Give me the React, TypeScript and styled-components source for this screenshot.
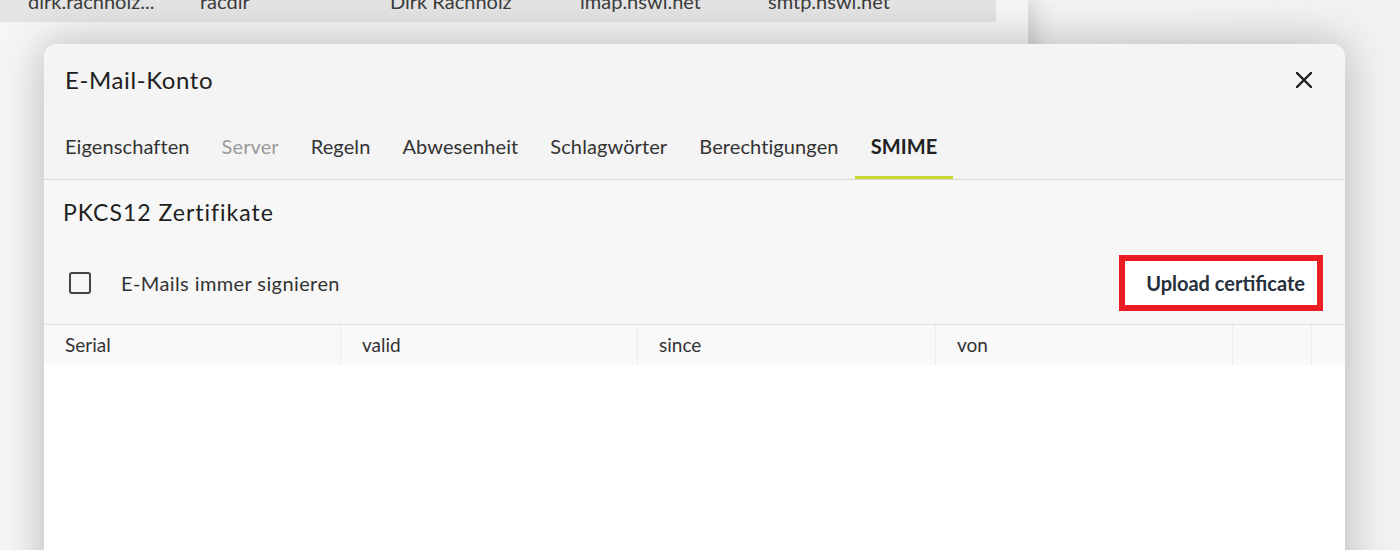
import React from "react";
import styled, { createGlobalStyle } from "styled-components";

const GlobalStyle = createGlobalStyle`
  html, body {
    margin: 0;
    padding: 0;
    height: 100%;
    overflow: hidden;
    background: #f4f4f4;
    font-family: "Lato", "Noto Sans", sans-serif;
  }
`;

const accounts = [
  ["dirk.rachholz...", "racdir", "Dirk Rachholz", "imap.nswi.net", "smtp.nswi.net"],
];

const tabs = [
  { label: "Eigenschaften" },
  { label: "Server", disabled: true },
  { label: "Regeln" },
  { label: "Abwesenheit" },
  { label: "Schlagwörter" },
  { label: "Berechtigungen" },
  { label: "SMIME", active: true },
];

const columns = ["Serial", "valid", "since", "von", "", ""];

export default function App() {
  return (
    <>
      <GlobalStyle />
      <Screen>
        <BackPanel>
          {accounts.map((row, i) => (
            <AccountRow key={i}>
              {row.map((cell, j) => (
                <AccountCell key={j} $width={[172, 190, 190, 188, 160][j]}>
                  {cell}
                </AccountCell>
              ))}
            </AccountRow>
          ))}
        </BackPanel>

        <Dialog>
          <TitleBar>
            <Title>E-Mail-Konto</Title>
            <CloseButton aria-label="Schließen">
              <svg width="18" height="18" viewBox="0 0 18 18">
                <path
                  d="M2 2 L16 16 M16 2 L2 16"
                  stroke="#1a1a1a"
                  strokeWidth="2.4"
                  strokeLinecap="round"
                />
              </svg>
            </CloseButton>
          </TitleBar>

          <TabBar>
            {tabs.map((t) => (
              <Tab key={t.label} $active={!!t.active} $disabled={!!t.disabled}>
                {t.label}
              </Tab>
            ))}
          </TabBar>

          <Content>
            <SectionTitle>PKCS12 Zertifikate</SectionTitle>
            <Toolbar>
              <CheckLabel>
                <CheckBox />
                E-Mails immer signieren
              </CheckLabel>
              <UploadButton>Upload certificate</UploadButton>
            </Toolbar>
            <TableHead>
              {columns.map((c, i) => (
                <HeadCell key={i}>{c}</HeadCell>
              ))}
            </TableHead>
            <TableBody />
          </Content>
        </Dialog>
      </Screen>
    </>
  );
}

const Screen = styled.div`
  position: relative;
  width: 1400px;
  height: 550px;
  overflow: hidden;
  background: linear-gradient(90deg, #f7f7f7 0%, #f2f2f2 100%);
`;

const BackPanel = styled.div`
  width: 1028px;
  height: 550px;
  background: #f6f6f6;
  box-shadow: 6px 0 22px rgba(0, 0, 0, 0.16);
`;

const AccountRow = styled.div`
  display: flex;
  align-items: flex-end;
  width: 968px;
  height: 22px;
  padding-left: 28px;
  background: #e4e4e4;
  overflow: hidden;
`;

const AccountCell = styled.div<{ $width: number }>`
  flex: 0 0 ${(p) => p.$width}px;
  font-size: 20px;
  line-height: 20px;
  margin-bottom: 11px;
  color: #3c3c3c;
  white-space: nowrap;
`;

const Dialog = styled.div`
  position: absolute;
  top: 44px;
  left: 44px;
  width: 1301px;
  height: 560px;
  display: flex;
  flex-direction: column;
  background: #f4f4f4;
  border-radius: 12px 12px 0 0;
  box-shadow: 0 0 46px rgba(0, 0, 0, 0.26);
  overflow: hidden;
`;

const TitleBar = styled.div`
  display: flex;
  align-items: center;
  justify-content: space-between;
  height: 71px;
  padding: 0 32px 0 21px;
`;

const Title = styled.h1`
  margin: 0;
  font-size: 24px;
  line-height: 28px;
  font-weight: 400;
  letter-spacing: 0.6px;
  color: #1e1e1e;
`;

const CloseButton = styled.button`
  display: flex;
  padding: 0;
  border: none;
  background: none;
  cursor: pointer;
`;

const TabBar = styled.div`
  display: flex;
  padding-left: 5px;
  border-bottom: 1px solid #dadada;
`;

const Tab = styled.div<{ $active: boolean; $disabled: boolean }>`
  display: flex;
  align-items: center;
  height: 61px;
  padding: 0 16px;
  border-bottom: 3px solid ${(p) => (p.$active ? "#c9d72f" : "transparent")};
  font-size: 20px;
  letter-spacing: 0.1px;
  font-weight: ${(p) => (p.$active ? 700 : 400)};
  color: ${(p) => (p.$disabled ? "#9a9a9a" : p.$active ? "#222" : "#333")};
  cursor: pointer;
`;

const Content = styled.div`
  flex: 1;
  display: flex;
  flex-direction: column;
  background: #f7f7f7;
`;

const SectionTitle = styled.h2`
  margin: 0;
  padding: 19px 19px 19px;
  font-size: 23px;
  line-height: 26px;
  font-weight: 400;
  letter-spacing: 1px;
  color: #1e1e1e;
`;

const Toolbar = styled.div`
  display: flex;
  align-items: center;
  justify-content: space-between;
  height: 81px;
  padding: 0 22px 2px 25px;
  box-sizing: border-box;
  border-bottom: 1px solid #e3e3e3;
`;

const CheckLabel = styled.label`
  display: flex;
  align-items: center;
  gap: 30px;
  font-size: 20px;
  letter-spacing: 0.4px;
  color: #333;
`;

const CheckBox = styled.span`
  display: block;
  width: 18px;
  height: 18px;
  border: 2.5px solid #444;
  border-radius: 3px;
`;

const UploadButton = styled.button`
  height: 56px;
  padding: 0 12px 0 21px;
  border: 6px solid #ec1c24;
  background: #fff;
  font-family: inherit;
  font-size: 20px;
  font-weight: 700;
  color: #26303c;
  cursor: pointer;
`;

const TableHead = styled.div`
  display: grid;
  grid-template-columns: 296px 297px 298px 297px 79px 1fr;
  height: 40px;
  background: #f9f9f9;
`;

const HeadCell = styled.div`
  display: flex;
  align-items: center;
  padding: 0 0 1px 21px;
  font-size: 19px;
  color: #333;
  & + & {
    border-left: 1px solid #ececec;
  }
`;

const TableBody = styled.div`
  flex: 1;
  background: #fff;
`;
